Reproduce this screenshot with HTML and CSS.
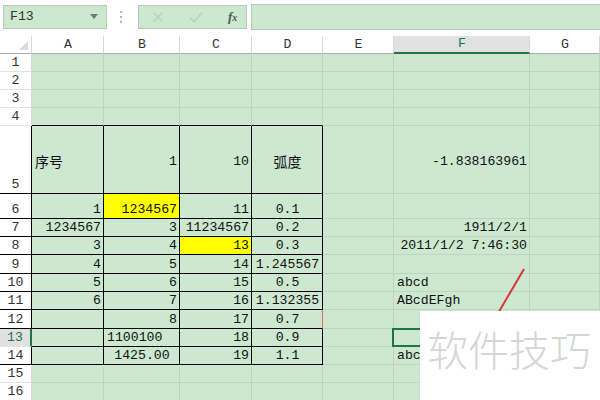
FILE: index.html
```html
<!DOCTYPE html>
<html lang="zh">
<head>
    <meta charset="UTF-8">
    <title>Sheet</title>
    <link rel="stylesheet" href="styles.css">
</head>
<body>
    <div class="toolbar">
        <div class="name-box">
            <span>F13</span>
            <svg class="drop" width="8" height="5" viewBox="0 0 8 5"><path d="M0 0h8L4 5z" fill="#777"/></svg>
        </div>
        <svg class="grip" width="3" height="12" viewBox="0 0 3 12">
            <rect x="0" y="0" width="2" height="2" fill="#b5b5b5"/>
            <rect x="0" y="5" width="2" height="2" fill="#b5b5b5"/>
            <rect x="0" y="10" width="2" height="2" fill="#b5b5b5"/>
        </svg>
        <div class="fx-buttons">
            <svg width="12" height="12" viewBox="0 0 12 12"><path d="M1.5 1.5l9 9M10.5 1.5l-9 9" stroke="#b9cdbb" stroke-width="1.3" fill="none"/></svg>
            <svg width="14" height="12" viewBox="0 0 14 12"><path d="M1 6.5l4 4L13 1.5" stroke="#b9cdbb" stroke-width="1.3" fill="none"/></svg>
            <span class="fx">f<small>x</small></span>
        </div>
        <div class="formula-input"></div>
    </div>

    <div class="sheet" id="sheet"></div>

    <svg class="pen-line" width="40" height="60" viewBox="0 0 40 60">
        <path d="M32 4L5 50" stroke="#d8343a" stroke-width="2" fill="none"/>
    </svg>
    <div class="watermark">软件技巧</div>

    <script>
        const sheet = document.getElementById('sheet');
        const cols = ['A', 'B', 'C', 'D', 'E', 'F', 'G'];

        const data = {
            5: { A: ['序号', 'left cjk'], B: ['1'], C: ['10'], D: ['弧度', 'center cjk'], F: ['-1.838163961'] },
            6: { A: ['1'], B: ['1234567', 'yellow'], C: ['11'], D: ['0.1', 'center'] },
            7: { A: ['1234567'], B: ['3'], C: ['11234567'], D: ['0.2', 'center'], F: ['1911/2/1'] },
            8: { A: ['3'], B: ['4'], C: ['13', 'yellow'], D: ['0.3', 'center'], F: ['2011/1/2 7:46:30'] },
            9: { A: ['4'], B: ['5'], C: ['14'], D: ['1.245567', 'center'] },
            10: { A: ['5'], B: ['6'], C: ['15'], D: ['0.5', 'center'], F: ['abcd', 'left'] },
            11: { A: ['6'], B: ['7'], C: ['16'], D: ['1.132355', 'center'], F: ['ABcdEFgh', 'left'] },
            12: { B: ['8'], C: ['17'], D: ['0.7', 'center'] },
            13: { B: ['1100100', 'left'], C: ['18'], D: ['0.9', 'center'] },
            14: { B: ['1425.00', 'center'], C: ['19'], D: ['1.1', 'center'], F: ['abc', 'left'] }
        };

        function addCell(text, classes) {
            const cell = document.createElement('div');
            cell.className = 'cell ' + classes;
            if (text) {
                const span = document.createElement('span');
                span.textContent = text;
                cell.appendChild(span);
            }
            sheet.appendChild(cell);
        }

        // column headers
        addCell('', 'corner');
        cols.forEach(col => addCell(col, 'col-head' + (col === 'F' ? ' active' : '')));

        for (let r = 1; r <= 16; r++) {
            const inBox = r >= 5 && r <= 14;
            let headClass = 'row-head';
            if (r === 13) headClass += ' active';
            else if (inBox) headClass += ' boxed';
            addCell(String(r), headClass);

            cols.forEach((col, i) => {
                const entry = (data[r] || {})[col];
                let classes = entry && entry[1] ? entry[1] : 'right';
                if (i < 4 && inBox) classes += ' boxed';
                if (i < 4 && r === 4) classes += ' box-top';
                if (r === 5) classes += ' mid';
                if (r === 12 && col === 'D') classes += ' red-edge';
                if (r === 13 && col === 'F') classes += ' selected';
                addCell(entry ? entry[0] : '', classes);
            });
        }
    </script>
</body>
</html>
```

FILE: styles.css
```css
body {
    margin: 0;
    width: 600px;
    height: 400px;
    overflow: hidden;
    position: relative;
    background-color: #fff;
    font-family: 'Liberation Mono', 'Noto Sans CJK SC', monospace;
    font-size: 13.2px;
    color: #111;
}

.toolbar {
    display: flex;
    align-items: center;
    height: 36px;
    padding-left: 3px;
    box-sizing: border-box;
    padding-bottom: 6px;
    padding-top: 3px;
}

.name-box {
    display: flex;
    align-items: center;
    justify-content: space-between;
    width: 104px;
    height: 24px;
    box-sizing: border-box;
    padding: 0 8px 0 6px;
    background-color: #cce8cf;
    border: 1px solid #b7c7b9;
    color: #333;
}

.grip {
    margin-left: 13px;
    margin-right: 15px;
}

.fx-buttons {
    display: flex;
    align-items: center;
    gap: 25px;
    width: 109px;
    height: 24px;
    box-sizing: border-box;
    padding-left: 13px;
    background-color: #cce8cf;
    border: 1px solid #b7c7b9;
}

.fx {
    font-family: 'Liberation Serif', serif;
    font-style: italic;
    font-weight: bold;
    font-size: 13px;
    color: #555;
}

.fx small {
    font-size: 10px;
}

.formula-input {
    flex: 1;
    height: 24px;
    margin-left: 4px;
    background-color: #cce8cf;
    border: 1px solid #b7c7b9;
    border-right: none;
}

.sheet {
    display: grid;
    grid-template-columns: 32px 72px 76px 72px 71px 71px 136px 70px;
    grid-template-rows: 18px 18px 18px 18px 18px 68px 25px 18px 18px 19px 18px 18px 19px 18px 18px 18px 18px;
}

.cell {
    display: flex;
    align-items: flex-end;
    justify-content: flex-end;
    padding: 0 2px 1px 3px;
    white-space: nowrap;
    background-color: #cce8cf;
    border-right: 1px solid #bfd3c1;
    border-bottom: 1px solid #bfd3c1;
    position: relative;
    min-width: 0;
}

.cell.left {
    justify-content: flex-start;
}

.cell.center {
    justify-content: center;
}

.cell.mid {
    align-items: center;
    padding-top: 4px;
}

.cell.cjk {
    font-size: 14px;
}

.cell.yellow {
    background-color: #ffff00;
}

.cell.boxed {
    border-right-color: #000;
    border-bottom-color: #000;
}

.cell.box-top {
    border-bottom-color: #000;
}

.cell.red-edge {
    border-right-color: #e86a5c;
}

.cell.selected::after {
    content: '';
    position: absolute;
    left: -2px;
    top: -1px;
    right: -1px;
    bottom: -1px;
    border: 2px solid #217346;
}

.corner,
.col-head,
.row-head {
    background-color: #fff;
    color: #333;
}

.corner {
    border-right: 1px solid #d8d8d8;
    border-bottom: 1px solid #ababab;
}

.corner::before {
    content: '';
    position: absolute;
    right: 3px;
    bottom: 3px;
    border-left: 9px solid transparent;
    border-bottom: 9px solid #dcdcdc;
}

.col-head {
    justify-content: center;
    align-items: center;
    border-right: 1px solid #d8d8d8;
    border-bottom: 1px solid #ababab;
}

.col-head.active {
    background-color: #e1e1e1;
    color: #217346;
    border-bottom: 2px solid #217346;
}

.row-head {
    justify-content: center;
    border-right: 1px solid #d8d8d8;
    border-bottom: 1px solid #e2e2e2;
    padding: 0 0 1px 0;
}

.row-head.boxed {
    border-right-color: #000;
}

.row-head.active {
    background-color: #e1e1e1;
    color: #217346;
    border-right: 2px solid #217346;
}

.pen-line {
    position: absolute;
    left: 492px;
    top: 265px;
}

.watermark {
    position: absolute;
    left: 420px;
    top: 311px;
    width: 180px;
    height: 89px;
    box-sizing: border-box;
    padding: 13px 0 0 7px;
    background-color: #fff;
    font-family: 'Noto Sans CJK SC', sans-serif;
    font-size: 41px;
    font-weight: 300;
    line-height: 1.2;
    color: #d6d6d6;
    white-space: nowrap;
}
```
